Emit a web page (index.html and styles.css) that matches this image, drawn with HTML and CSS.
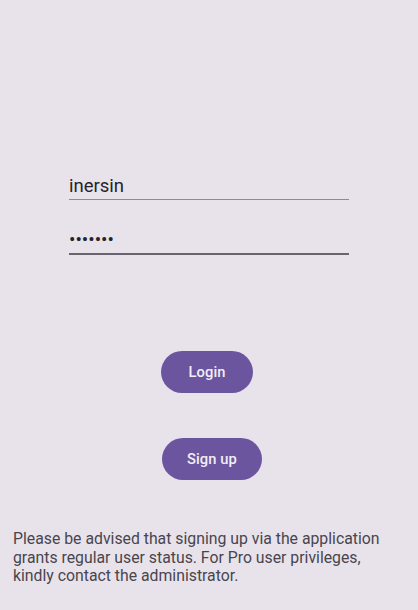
FILE: index.html
```html
<!DOCTYPE html>
<html>
<head>
<meta charset="utf-8">
<link rel="stylesheet" href="styles.css">
</head>
<body>
<main class="screen">
  <div class="form">
    <div class="field field-user">inersin</div>
    <div class="field field-pass">•••••••</div>
  </div>
  <div class="actions">
    <button class="btn btn-login">Login</button>
    <button class="btn btn-signup">Sign up</button>
  </div>
  <p class="notice">Please be advised that signing up via the application grants regular user status. For Pro user privileges, kindly contact the administrator.</p>
</main>
</body>
</html>
```
FILE: styles.css
```css
html, body {
  margin: 0;
  padding: 0;
  background: #e8e3ea;
}
.screen {
  width: 418px;
  height: 610px;
  display: flex;
  flex-direction: column;
  font-family: Roboto, "Liberation Sans", sans-serif;
  background: #e8e3ea;
  overflow: hidden;
}
.form {
  display: flex;
  flex-direction: column;
  gap: 29px;
  margin: 175px 0 0 69px;
  width: 280px;
}
.field {
  height: 24px;
  line-height: 23px;
  font-size: 18.5px;
  color: #25232a;
  box-sizing: content-box;
}
.field-user {
  border-bottom: 1px solid #8e8a92;
}
.field-pass {
  border-bottom: 2px solid #6a6470;
  font-size: 19px;
  letter-spacing: 0;
  line-height: 22px;
}
.actions {
  display: flex;
  flex-direction: column;
  align-items: center;
  margin-top: 96px;
  gap: 45px;
}
.btn {
  height: 42px;
  border: none;
  border-radius: 21px;
  background: #6a559e;
  color: #f3eef8;
  font-family: Roboto, "Liberation Sans", sans-serif;
  font-size: 14.7px;
  font-weight: 500;
  letter-spacing: 0.1px;
  padding: 0;
}
.btn-login {
  width: 92px;
  margin-right: 4px;
}
.btn-signup {
  width: 100px;
  margin-left: 6px;
}
.notice {
  margin: 50px 0 0 13px;
  width: 390px;
  font-size: 15.8px;
  line-height: 18.5px;
  color: #49454f;
}
```
